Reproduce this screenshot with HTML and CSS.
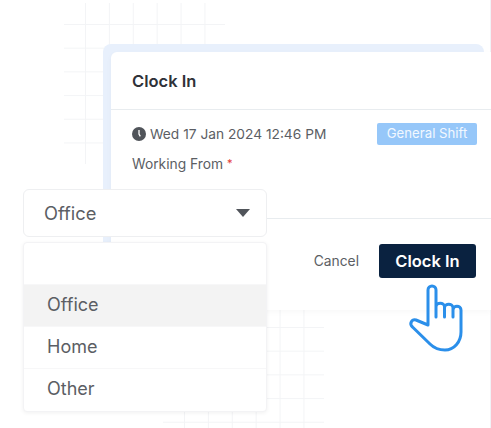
FILE: index.html
```html
<!DOCTYPE html>
<html lang="en">
<head>
  <meta charset="UTF-8">
  <title>Clock In</title>
  <link rel="stylesheet" href="styles.css">
</head>
<body>
  <div class="stage">
    <div class="grid grid-top"></div>
    <div class="grid grid-bottom"></div>
    <div class="edge-line"></div>

    <div class="backing">
      <div class="card">
        <div class="card-head">Clock In</div>
        <div class="card-body">
          <div class="info-row">
            <div class="when">
              <svg class="clock" width="14" height="14" viewBox="0 0 14 14">
                <circle cx="7" cy="7" r="7" fill="#50545a"/>
                <path d="M7 3v4l1.3 2.4" fill="none" stroke="#fff" stroke-width="1.3"/>
              </svg>
              <span>Wed 17 Jan 2024 12:46 PM</span>
            </div>
            <span class="badge">General Shift</span>
          </div>
          <div class="label">Working From <span class="req">*</span></div>
        </div>
        <div class="card-foot">
          <span class="cancel">Cancel</span>
          <button class="clock-btn">Clock In</button>
        </div>
      </div>
    </div>

    <div class="select">
      <div class="select-box">
        <span>Office</span>
        <span class="caret"></span>
      </div>
      <ul class="menu">
        <li class="blank"></li>
        <li class="active">Office</li>
        <li>Home</li>
        <li>Other</li>
      </ul>
    </div>

    <svg class="hand" width="65" height="80" viewBox="405 280 65 80">
      <path d="M428 325V290a4 4 0 0 1 8 0V317M436 307c0-5 8.500-5 8.500 0V317M444.500 308c0-5 8.500-5 8.500 0V317M453 310c0-5 8-5 8 0V332c0 10-7 18-16 18c-6 0-11-2-15-6L412.500 327c-3.500-3-1-8 3.500-7L428 325" fill="none" stroke="#2b8fea" stroke-width="3" stroke-linecap="round" stroke-linejoin="round"/>
    </svg>
  </div>
</body>
</html>
```

FILE: styles.css
```css
* {
  margin: 0;
  padding: 0;
  box-sizing: border-box;
  list-style: none;
}

body {
  margin: 0;
  background: #fff;
  font-family: "Inter", "Liberation Sans", sans-serif;
  color: #5b5e64;
}

.stage {
  position: relative;
  width: 491px;
  height: 428px;
  padding: 44px 0 0 103px;
  overflow: hidden;
}

/* decorative grids behind the card */
.grid {
  position: absolute;
  width: 161px;
  height: 161px;
  background-image:
    linear-gradient(to right, #f3f4f6 1px, transparent 1px),
    linear-gradient(to bottom, #f3f4f6 1px, transparent 1px);
  background-size: 23.9px 23.7px;
}
.grid-top {
  left: 64px;
  top: 3px;
  background-position: 21px 21px;
}
.grid-bottom {
  left: 163px;
  top: 308px;
  height: 120px;
  background-position: 21px 19px;
}
.edge-line {
  position: absolute;
  left: 490px;
  top: 0;
  width: 1px;
  height: 428px;
  background: #f1f3f7;
}

.backing {
  position: relative;
  width: 381px;
  height: 260px;
  background: #e8f0fc;
  border-radius: 8px;
}

.card {
  width: 380px;
  margin-left: 8px;
  position: relative;
  top: 8px;
  background: #fff;
  border-radius: 6px 0 0 6px;
  box-shadow: 0 2px 6px rgba(0, 0, 0, .03);
}

.card-head {
  height: 58px;
  padding: 0 21px;
  display: flex;
  align-items: center;
  font-size: 16.500px;
  font-weight: 600;
  color: #2f3238;
  border-bottom: 1px solid #e8ecef;
}

.card-body {
  height: 109px;
  padding: 13px 14px 0 21px;
  border-bottom: 1px solid #e8ecef;
}

.info-row {
  display: flex;
  justify-content: space-between;
  align-items: center;
}

.when {
  display: flex;
  align-items: center;
  gap: 4px;
  font-size: 13.750px;
}

.badge {
  width: 100px;
  height: 22px;
  line-height: 21px;
  text-align: center;
  font-size: 13.200px;
  color: #f2f8ff;
  background: #96c7f9;
  border-radius: 2px;
}

.label {
  margin-top: 11px;
  font-size: 13.800px;
}
.req {
  color: #e53935;
  font-size: 11px;
  vertical-align: top;
}

.card-foot {
  height: 91px;
  padding: 25px 15px 0 0;
  display: flex;
  justify-content: flex-end;
  align-items: flex-start;
  gap: 20px;
}

.cancel {
  font-size: 13.800px;
  line-height: 34px;
}

.clock-btn {
  width: 97px;
  height: 34px;
  border: 0;
  border-radius: 3px;
  background: #0a2240;
  color: #fff;
  font-family: inherit;
  font-size: 16.500px;
  font-weight: 600;
}

/* open dropdown laid over the card */
.select {
  position: absolute;
  left: 23px;
  top: 189px;
  width: 244px;
}

.select-box {
  height: 48px;
  padding: 0 16px 0 20px;
  display: flex;
  justify-content: space-between;
  align-items: center;
  font-size: 18.300px;
  background: #fff;
  border: 1px solid #eeeff1;
  border-radius: 6px;
}

.caret {
  width: 0;
  height: 0;
  border-left: 7px solid transparent;
  border-right: 7px solid transparent;
  border-top: 8px solid #50545a;
}

.menu {
  margin-top: 5px;
  background: #fff;
  border: 1px solid #f3f3f5;
  border-radius: 4px;
  box-shadow: 0 1px 4px rgba(0, 0, 0, .06);
  font-size: 18px;
}

.menu li {
  height: 42px;
  line-height: 39px;
  padding-left: 23px;
  border-bottom: 1px solid #f7f7f8;
}
.menu li:last-child {
  border-bottom: 0;
}
.menu li.active {
  background: #f3f3f3;
}

.hand {
  position: absolute;
  left: 405px;
  top: 280px;
}
```
